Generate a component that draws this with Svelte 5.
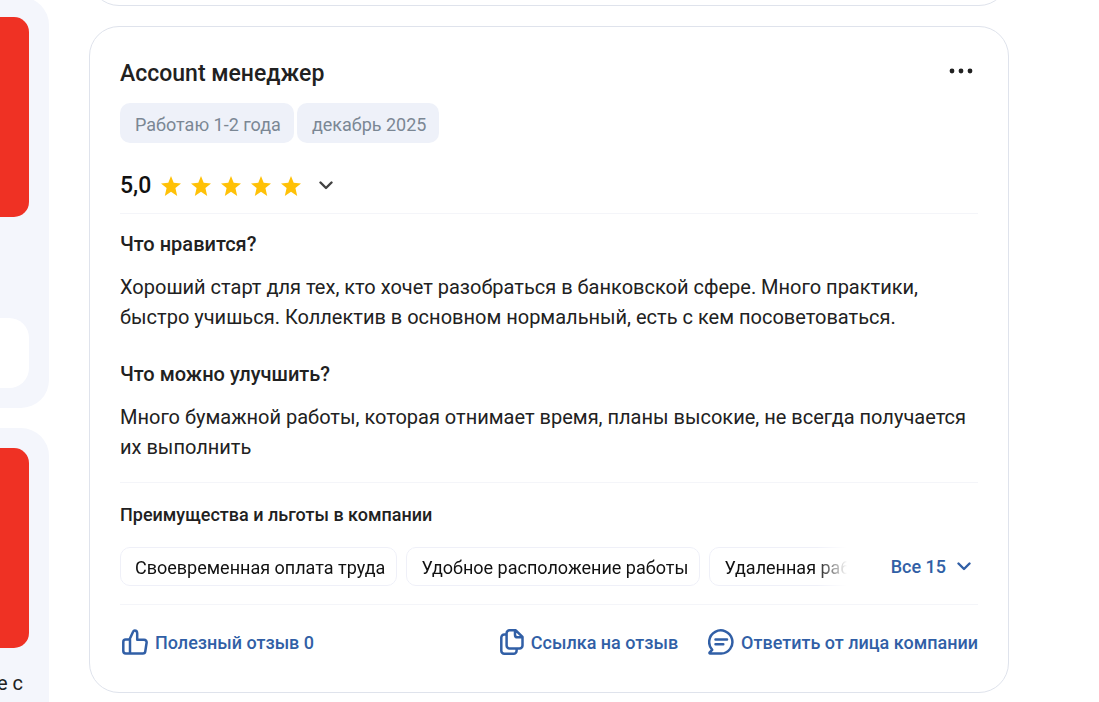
<script lang="ts">
  const tags = ['Работаю 1-2 года', 'декабрь 2025'];
  const benefits = ['Своевременная оплата труда', 'Удобное расположение работы', 'Удаленная работа'];
  const sections = [
    {
      title: 'Что нравится?',
      text: 'Хороший старт для тех, кто хочет разобраться в банковской сфере. Много практики, быстро учишься. Коллектив в основном нормальный, есть с кем посоветоваться.'
    },
    {
      title: 'Что можно улучшить?',
      text: 'Много бумажной работы, которая отнимает время, планы высокие, не всегда получается их выполнить'
    }
  ];
</script>

<div class="page">
  <aside class="sidebar">
    <div class="promo">
      <div class="banner"></div>
      <div class="panel"></div>
    </div>
    <div class="promo">
      <div class="banner"></div>
      <p class="caption">е с</p>
    </div>
  </aside>

  <main class="feed">
    <article class="card previous"></article>

    <article class="card review">
      <header class="head">
        <h2>Account менеджер</h2>
        <button class="more" aria-label="Меню отзыва">
          <svg width="24" height="6" viewBox="0 0 24 6" fill="#212121">
            <circle cx="3" cy="3" r="2.4" /><circle cx="12" cy="3" r="2.4" /><circle cx="21" cy="3" r="2.4" />
          </svg>
        </button>
      </header>

      <ul class="tags">
        {#each tags as tag}<li>{tag}</li>{/each}
      </ul>

      <div class="rating">
        <span class="score">5,0</span>
        <span class="stars">
          {#each Array(5) as _}
            <svg width="20" height="20" viewBox="0 0 20 20" fill="#ffc107">
              <path d="M10 0l2.700 6.800 7.300.6-5.600 4.700 1.800 7.900-6.200-4.300L3.800 20l1.800-7.900L0 7.400l7.300-.6z" />
            </svg>
          {/each}
        </span>
        <button class="expand" aria-label="Показать оценки">
          <svg width="14" height="9" viewBox="0 0 14 9" fill="none" stroke="#424242" stroke-width="2.4" stroke-linecap="round" stroke-linejoin="round">
            <path d="M1.500 1.500L7 7l5.500-5.500" />
          </svg>
        </button>
      </div>

      <div class="body">
        {#each sections as section}
          <section>
            <h3>{section.title}</h3>
            <p>{section.text}</p>
          </section>
        {/each}
      </div>

      <div class="benefits">
        <h4>Преимущества и льготы в компании</h4>
        <div class="benefit-row">
          <ul class="chips">
            {#each benefits as benefit}<li>{benefit}</li>{/each}
          </ul>
          <button class="all">
            Все 15
            <svg width="14" height="9" viewBox="0 0 14 9" fill="none" stroke="currentColor" stroke-width="2.4" stroke-linecap="round" stroke-linejoin="round">
              <path d="M1.500 1.500L7 7l5.500-5.500" />
            </svg>
          </button>
        </div>
      </div>

      <footer class="actions">
        <button class="useful">
          <svg width="26" height="26" viewBox="0 0 26 26" fill="none" stroke="currentColor" stroke-width="2.5" stroke-linejoin="round" stroke-linecap="round">
            <path d="M7.500 10.500H3.700A2.400 2.400 0 0 0 1.300 12.900v9.200a2.400 2.400 0 0 0 2.400 2.400h17.100a2.500 2.500 0 0 0 2.500-2.200l1.300-8.600a2.500 2.500 0 0 0-2.500-2.900h-6.900V4.600c0-2-1.200-3.200-2.500-3.200-.7 0-1.200.4-1.500 1.100zM8 10.500v14" />
          </svg>
          Полезный отзыв 0
        </button>
        <button>
          <svg width="24" height="26" viewBox="0 0 24 26" fill="none" stroke="currentColor" stroke-width="2.5" stroke-linejoin="round" stroke-linecap="round">
            <path d="M15.800 1.300H9.600a3 3 0 0 0-3 3v12.200a3 3 0 0 0 3 3h9.900a3 3 0 0 0 3-3V7.900zM15 1.500v4.400A2.400 2.400 0 0 0 17.400 8.300h4.800M6.300 5.500H4.300a3 3 0 0 0-3 3v13.200a3 3 0 0 0 3 3h9.300a3 3 0 0 0 3-3v-1.900" />
          </svg>
          Ссылка на отзыв
        </button>
        <button>
          <svg width="26" height="26" viewBox="0 0 26 26" fill="none" stroke="currentColor" stroke-width="2.5" stroke-linejoin="round" stroke-linecap="round">
            <path d="M13.200 24.600H2.200c-.8 0-1-.7-.5-1.200l2.500-2.600A11.600 11.600 0 1 1 13.200 24.600zM7.500 10.500h11.500M7.500 15.300h7.800" />
          </svg>
          Ответить от лица компании
        </button>
      </footer>
    </article>
  </main>
</div>

<style>
  :global(body) {
    background: #fff;
    overflow: hidden;
  }
  .page {
    display: grid;
    grid-template-columns: 49px minmax(0, 1fr);
    column-gap: 40px;
    padding-right: 90px;
    height: 100vh;
    overflow: hidden;
    font-family: Roboto, "Liberation Sans", sans-serif;
    font-size: 18px;
    color: #212121;
  }
  h2, h3, h4, p, ul {
    margin: 0;
    padding: 0;
    font-weight: 500;
  }
  ul {
    list-style: none;
    display: flex;
  }
  button {
    display: flex;
    align-items: center;
    border: 0;
    padding: 0;
    background: none;
    font: inherit;
    color: inherit;
    cursor: pointer;
  }
  svg {
    display: block;
    flex: none;
  }
  .sidebar {
    display: flex;
    flex-direction: column;
    align-items: flex-end;
    gap: 20px;
    margin-top: -3px;
    overflow: hidden;
  }
  .promo {
    box-sizing: border-box;
    width: 260px;
    flex: none;
    padding: 20px;
    border-radius: 28px;
    background: #f4f6fc;
  }
  .banner {
    height: 200px;
    border-radius: 15px;
    background: #ef3124;
  }
  .panel {
    height: 70px;
    margin-top: 101px;
    border-radius: 20px;
    background: #fff;
  }
  .caption {
    padding: 20px 6px 40px;
    text-align: right;
    line-height: 30px;
    font-size: 20px;
    font-weight: 400;
  }
  .card {
    border: 1px solid #dfe3ec;
    border-radius: 30px;
    padding: 30px;
  }
  .previous {
    margin-top: -56px;
    margin-bottom: 20px;
  }
  .head {
    display: flex;
    justify-content: space-between;
    align-items: flex-start;
    padding-right: 5px;
  }
  h2 {
    font-size: 23px;
    line-height: 34px;
  }
  .more {
    height: 28px;
  }
  .tags {
    gap: 3px;
    margin-top: 12px;
  }
  .tags li {
    padding: 0 13px 0 15px;
    line-height: 44px;
    height: 40px;
    border-radius: 10px;
    background: #eef1f9;
    color: #7b8794;
    font-weight: 400;
  }
  .rating {
    display: flex;
    align-items: center;
    height: 30px;
    margin-top: 27px;
    padding-bottom: 13px;
    border-bottom: 1px solid #f4f5f9;
  }
  .score {
    font-size: 23px;
    font-weight: 500;
    color: #111;
  }
  .stars {
    display: flex;
    gap: 10px;
    margin: 2px 18px 0 10px;
  }
  .body {
    padding: 15px 0 20px;
    display: grid;
    gap: 27px;
    border-bottom: 1px solid #f4f5f9;
  }
  h3 {
    font-size: 20px;
    line-height: 30px;
    margin-bottom: 13px;
  }
  .body p {
    font-size: 20px;
    line-height: 30px;
    font-weight: 400;
  }
  .benefits {
    padding: 20px 0 18px;
    border-bottom: 1px solid #f4f5f9;
  }
  h4 {
    font-size: 18px;
    line-height: 24px;
  }
  .benefit-row {
    display: flex;
    align-items: center;
    gap: 44px;
    margin-top: 20px;
  }
  .chips {
    flex: 1;
    min-width: 0;
    gap: 9px;
    overflow: hidden;
    mask-image: linear-gradient(to right, #000 calc(100% - 30px), transparent);
  }
  .chips li {
    flex: none;
    padding: 0 11px 0 14px;
    border: 1px solid #eff0f8;
    border-radius: 10px;
    line-height: 40px;
    height: 37px;
    font-weight: 400;
    white-space: nowrap;
    color: #111;
  }
  .all {
    gap: 11px;
    padding-right: 7px;
    font-weight: 500;
    color: #315fa6;
    white-space: nowrap;
  }
  .actions {
    display: flex;
    align-items: center;
    gap: 30px;
    padding: 24px 0 7px 2px;
    color: #315fa6;
  }
  .actions button {
    gap: 7px;
    font-weight: 500;
    white-space: nowrap;
  }
  .useful {
    margin-right: auto;
  }
</style>
